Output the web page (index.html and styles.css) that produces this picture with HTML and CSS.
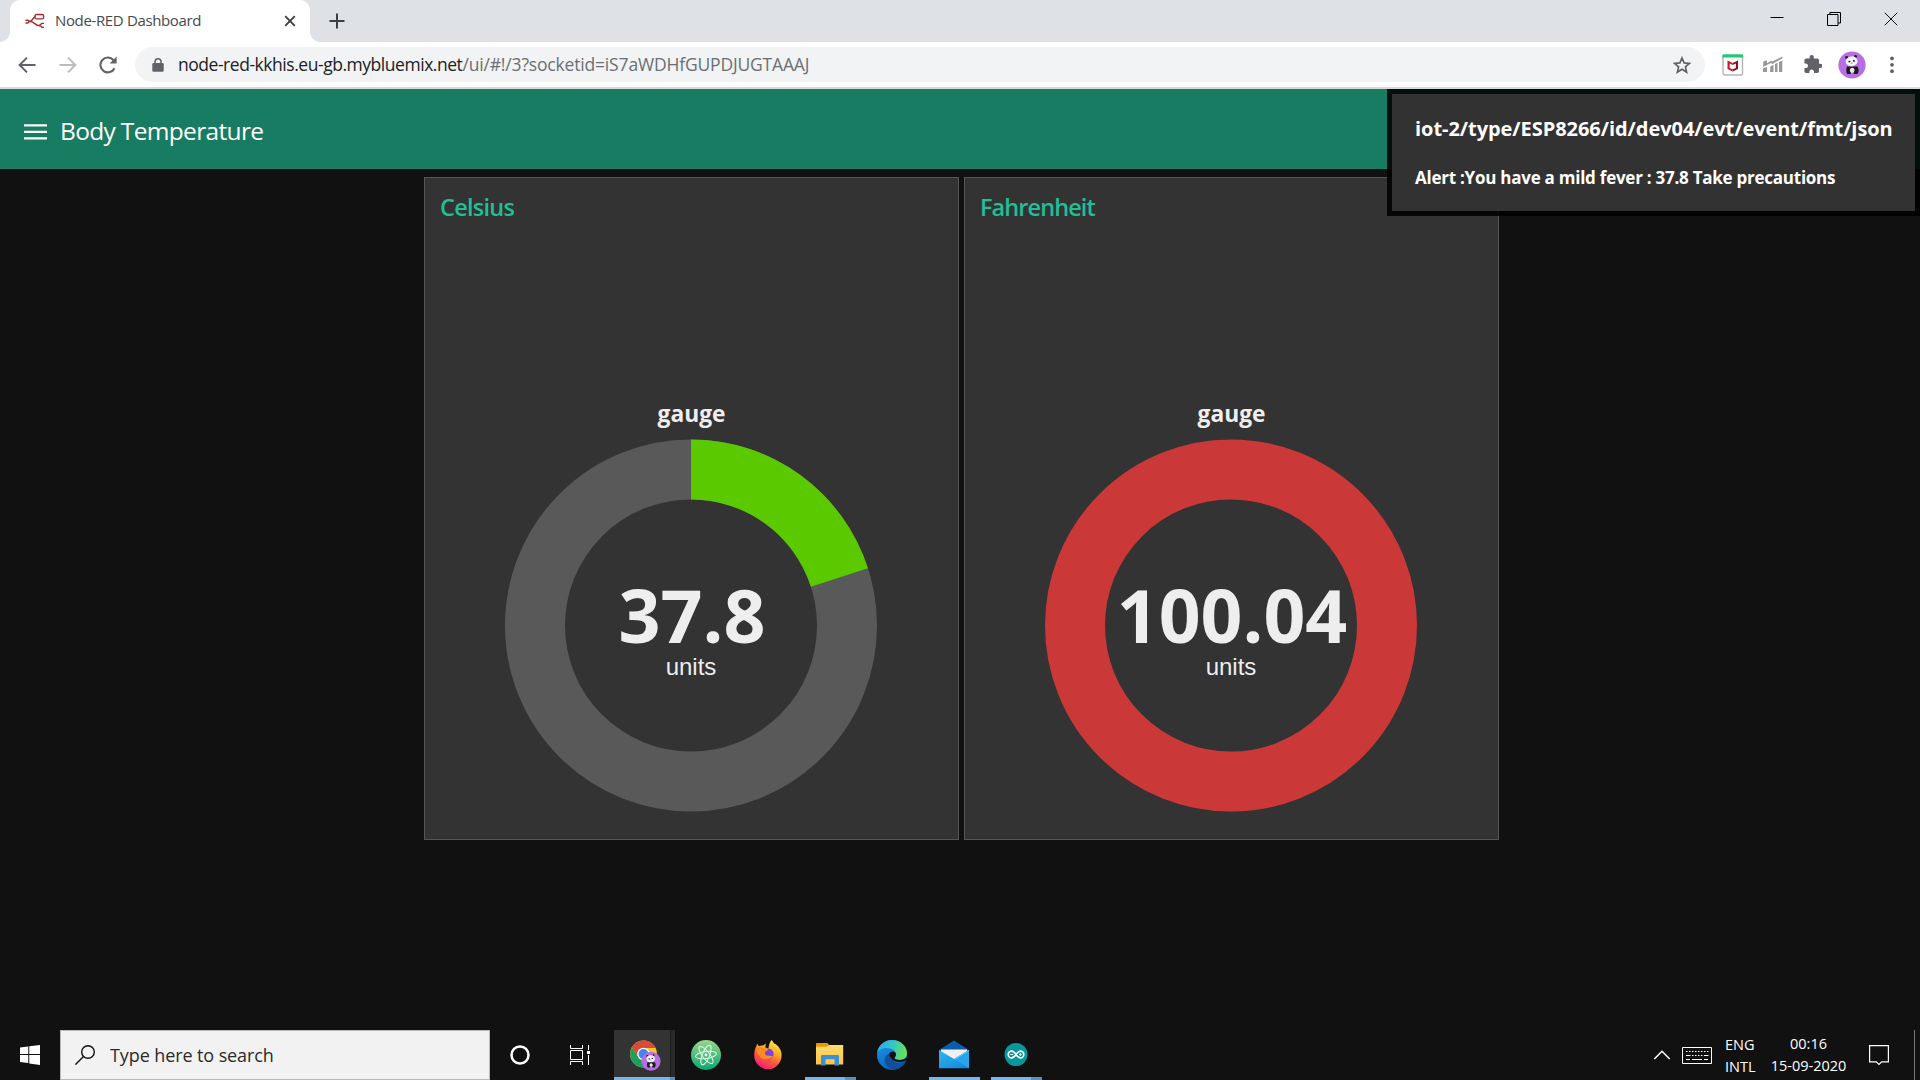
FILE: index.html
```html
<!DOCTYPE html>
<html lang="en">
<head>
<meta charset="utf-8">
<title>Node-RED Dashboard</title>
<link rel="stylesheet" href="styles.css">
</head>
<body>
<svg class="defs" width="0" height="0" aria-hidden="true">
  <defs>
    <linearGradient id="atomG" x1="0" y1="0" x2="0" y2="1"><stop offset="0" stop-color="#9ad58b"/><stop offset="1" stop-color="#0aa773"/></linearGradient>
    <linearGradient id="foxG" x1="0.8" y1="0" x2="0.3" y2="1"><stop offset="0" stop-color="#fff04a"/><stop offset="0.35" stop-color="#ffb02a"/><stop offset="0.65" stop-color="#ff5a35"/><stop offset="1" stop-color="#f0197f"/></linearGradient>
    <linearGradient id="folderG" x1="0" y1="0" x2="0" y2="1"><stop offset="0" stop-color="#ffdc70"/><stop offset="1" stop-color="#fcc544"/></linearGradient>
    <linearGradient id="edgeTop" x1="0" y1="0.3" x2="1" y2="0.5"><stop offset="0" stop-color="#2aa9e6"/><stop offset="0.5" stop-color="#35c6c9"/><stop offset="1" stop-color="#6be24c"/></linearGradient>
    <linearGradient id="edgeLow" x1="0" y1="0" x2="0.5" y2="1"><stop offset="0" stop-color="#1a9ae8"/><stop offset="1" stop-color="#0a63bd"/></linearGradient>
    <linearGradient id="mailG" x1="0" y1="0" x2="1" y2="1"><stop offset="0" stop-color="#31b5ef"/><stop offset="1" stop-color="#1583dc"/></linearGradient>
    <g id="panda">
      <circle cx="14" cy="14" r="13.600" fill="#b56ee4"/>
      <path d="M9 15.500h10.500c1.500 2.500 1.500 5.500 0 7.500h-3.500l-1-2.500h-1.500L12.700 23H9.200c-1.200-2-1.200-5-.2-7.500z" fill="#1d1a1e"/>
      <ellipse cx="14.200" cy="19.300" rx="2.300" ry="2.600" fill="#e8e4e4"/>
      <circle cx="8.600" cy="6.400" r="1.400" fill="#1d1a1e"/><circle cx="17.600" cy="5.400" r="1.400" fill="#1d1a1e"/>
      <ellipse cx="13.600" cy="10.300" rx="6" ry="4.900" transform="rotate(-8 13.600 10.300)" fill="#f4f2f2"/>
      <ellipse cx="11.400" cy="10.600" rx="1.100" ry=".8" fill="#1d1a1e"/><ellipse cx="15.900" cy="9.900" rx="1.100" ry=".8" fill="#1d1a1e"/>
      <circle cx="13.900" cy="12.100" r=".5" fill="#1d1a1e"/>
    </g>
  </defs>
</svg>

<div class="tabstrip">
  <div class="tab">
    <svg class="favicon" width="20" height="16" viewBox="0 0 20 16" fill="none" stroke="#a02c30" stroke-width="1.400">
      <rect x="10" y="1.500" width="8.600" height="4.400" rx="1.400"/>
      <path d="M.5 7.200h2.200l1.800 1.200-1.800 1.600H.5M4.500 8.400c4.200 0 2.600-4.600 6-4.700M4.500 8.400c5.500 0 5.200 4.500 10.400 4.300M19 10.400h-2.200l-1.900 1.600 1.900 2.400H19"/>
    </svg>
    <span class="tab-title">Node-RED Dashboard</span>
    <svg class="tab-close" width="12" height="12" viewBox="0 0 12 12" stroke="#3c4043" stroke-width="1.900"><path d="M1.200 1.200l9.600 9.600M10.800 1.200l-9.600 9.600"/></svg>
  </div>
  <svg class="new-tab" width="16" height="16" viewBox="0 0 16 16" stroke="#3c4043" stroke-width="2"><path d="M8 .5v15M.5 8h15"/></svg>
  <div class="window-buttons">
    <svg width="14" height="14" viewBox="0 0 14 14" stroke="#000"><path d="M.5 5.500h13"/></svg>
    <svg width="14" height="14" viewBox="0 0 14 14" fill="none" stroke="#000"><path d="M.5 2.500h10.500v11H.5zM2.900 2.500v-2h10.600v10.500h-2.500"/></svg>
    <svg width="14" height="14" viewBox="0 0 14 14" stroke="#111"><path d="M.7.7l12.600 12.600M13.300.7L.7 13.300"/></svg>
  </div>
</div>

<div class="toolbar">
  <div class="nav">
    <svg width="18" height="18" viewBox="0 0 18 18" fill="none" stroke="#5f6368" stroke-width="2"><path d="M17.500 9H2M9 1.600L1.600 9 9 16.400"/></svg>
    <svg width="18" height="18" viewBox="0 0 18 18" fill="none" stroke="#babcbe" stroke-width="2"><path d="M.5 9H16M9 1.600L16.400 9 9 16.400"/></svg>
    <svg width="18" height="18" viewBox="0 0 18 18" fill="none" stroke="#5f6368" stroke-width="2.100"><path d="M15.500 12.200A7.400 7.400 0 1 1 14.600 4.300"/><path d="M17.600.6v6.900h-6.900z" fill="#5f6368" stroke="none"/></svg>
  </div>
  <div class="omnibox">
    <svg class="lock" width="12" height="14" viewBox="0 0 12 14"><rect x=".3" y="5" width="11.400" height="8.800" rx="1.300" fill="#5f6368"/><path d="M3 5.500V3.800a3 3 0 0 1 6 0v1.700" fill="none" stroke="#5f6368" stroke-width="1.500"/></svg>
    <div class="url"><span class="url-host">node-red-kkhis.eu-gb.mybluemix.net</span><span class="url-path">/ui/#!/3?socketid=iS7aWDHfGUPDJUGTAAAJ</span></div>
    <svg class="star" width="18" height="18" viewBox="0 0 18 18" fill="none" stroke="#5f6368" stroke-width="1.700"><path d="M9 2l2.100 4.900 5.300.5-4 3.500 1.200 5.200L9 13.300l-4.600 2.800 1.200-5.200-4-3.500 5.300-.5z"/></svg>
  </div>
  <div class="extensions">
    <svg class="ext-shield" width="22" height="22" viewBox="0 0 22 22"><rect x="1" y="1" width="19.500" height="20" rx="1.500" fill="#fff" stroke="#b5b5b5" stroke-width="1.400"/><path d="M.5.500H21v3H.5z" fill="#12cf70"/><path d="M5.500 6.500l5.200 2.400v2L7.700 9.600v4.300l3 1.400v2.300l-5.200-2.600z" fill="#d1152c"/><path d="M16 6.500l-5.300 2.400v2l3.200-1.300v4.300l-3.200 1.400v2.300l5.300-2.600z" fill="#8d0f1c"/></svg>
    <svg class="ext-chart" width="20" height="17" viewBox="0 0 20 17" fill="#999"><path d="M0 12.300l4-1.400V16H0zM7.200 10.600l3.300-1.800V16H7.200zM12 8.100l2.500-1.300V16H12zM16 6l3.300-1.600V16H16z"/><path d="M.3 5.400L4 4.200v3l4-2.400 1.200.8L19.300.6v1.900L9.300 7.900l-1.300-.8L0 10.900z"/></svg>
    <svg class="ext-puzzle" width="18" height="19" viewBox="1.500 1 21 22" fill="#5f6368"><path d="M20.500 11H19V7c0-1.100-.9-2-2-2h-4V3.500a2.500 2.500 0 0 0-5 0V5H4c-1.100 0-1.990.9-1.990 2v3.800H3.500c1.490 0 2.700 1.210 2.700 2.700s-1.210 2.700-2.700 2.700H2V20c0 1.100.9 2 2 2h3.800v-1.500c0-1.490 1.210-2.700 2.700-2.700s2.700 1.210 2.700 2.700V22H17c1.100 0 2-.9 2-2v-4h1.500a2.500 2.500 0 0 0 0-5z"/></svg>
    <svg class="avatar" width="28" height="28" viewBox="0 0 28 28"><use href="#panda"/></svg>
    <svg width="4" height="18" viewBox="0 0 4 18" fill="#5f6368"><circle cx="2" cy="2.400" r="1.900"/><circle cx="2" cy="8.800" r="1.900"/><circle cx="2" cy="15.200" r="1.900"/></svg>
  </div>
</div>

<header class="dash-header">
  <svg class="menu" width="24" height="16" viewBox="0 0 24 16" fill="#fff"><path d="M0 .2h23v2.300H0zM0 6.700h23V9H0zM0 13.200h23v2.300H0z"/></svg>
  <h1>Body Temperature</h1>
  <div class="toast">
    <h3>iot-2/type/ESP8266/id/dev04/evt/event/fmt/json</h3>
    <p>Alert :You have a mild fever : 37.8 Take precautions</p>
  </div>
</header>

<main class="dashboard">
  <section class="card">
    <h2>Celsius</h2>
    <svg class="gauge" width="500" height="440" viewBox="0 0 500 440">
      <text class="gauge-title" x="250.500" y="37" textLength="68" lengthAdjust="spacingAndGlyphs">gauge</text>
      <circle cx="250" cy="240.500" r="156" fill="none" stroke="#595959" stroke-width="60"/>
      <path d="M250 54.500A186 186 0 0 1 427 183.300L369.900 201.700A126 126 0 0 0 250 114.500z" fill="#5bc900"/>
      <text class="gauge-value" x="251" y="258" textLength="147" lengthAdjust="spacingAndGlyphs">37.8</text>
      <text class="gauge-units" x="250" y="290">units</text>
    </svg>
  </section>
  <section class="card">
    <h2 class="long">Fahrenheit</h2>
    <svg class="gauge" width="500" height="440" viewBox="0 0 500 440">
      <text class="gauge-title" x="250.500" y="37" textLength="68" lengthAdjust="spacingAndGlyphs">gauge</text>
      <circle cx="250" cy="240.500" r="156" fill="none" stroke="#ca3838" stroke-width="60"/>
      <text class="gauge-value" x="251" y="258" textLength="230.500" lengthAdjust="spacingAndGlyphs">100.04</text>
      <text class="gauge-units" x="250" y="290">units</text>
    </svg>
  </section>
</main>

<footer class="taskbar">
  <div class="start"><svg width="20" height="20" viewBox="0 0 20 20" fill="#fff"><path d="M0 2.600L8.300 1.500v7.600H0zM9.300 1.300L20 0v9.100H9.300zM0 10.100h8.300v8L0 17zM9.300 10.100H20V20L9.300 18.400z"/></svg></div>
  <div class="search">
    <svg width="20" height="20" viewBox="0 0 20 20" fill="none" stroke="#111" stroke-width="1.400"><circle cx="13" cy="7" r="6.300"/><path d="M8.500 11.500L.4 19.600"/></svg>
    <span>Type here to search</span>
  </div>
  <div class="sysbtn"><svg width="20" height="20" viewBox="0 0 20 20" fill="none" stroke="#fff" stroke-width="2.500"><circle cx="10" cy="10" r="8.500"/></svg></div>
  <div class="sysbtn taskview"><svg width="20" height="20" viewBox="0 0 20 20" fill="none" stroke="#fff"><path d="M.5 0v3.500h12V0M.5 5.500h12v9H.5zM.5 20v-3.500h12V20M18.500 0v5M18.500 10v10"/><path d="M17 6h3v3h-3z" fill="#fff" stroke="none"/></svg></div>
  <div class="app active split">
    <svg width="32" height="32" viewBox="0 0 32 32">
      <circle cx="14.500" cy="15" r="13.500" fill="#fbc32d"/>
      <path d="M2.800 8.300A13.500 13.500 0 0 1 26.500 9H14.500a6 6 0 0 0-5.600 8.200z" fill="#d9493c"/>
      <path d="M2.800 8.300A13.500 13.500 0 0 0 14.500 28.500L19 19a6 6 0 0 1-9.800-1z" fill="#1f9f5c"/>
      <circle cx="14.500" cy="15" r="6.200" fill="#fff"/><circle cx="14.500" cy="15" r="4.900" fill="#4384ee"/>
      <use href="#panda" transform="translate(12.200 12.500) scale(.7)"/>
    </svg>
  </div>
  <div class="app">
    <svg width="32" height="32" viewBox="0 0 32 32"><circle cx="16" cy="16" r="15" fill="url(#atomG)"/><g fill="none" stroke="#e0f8e4" stroke-width="1"><ellipse cx="16" cy="16" rx="10.500" ry="3.600" transform="rotate(-8 16 16)"/><ellipse cx="16" cy="16" rx="10.500" ry="3.600" transform="rotate(52 16 16)"/><ellipse cx="16" cy="16" rx="10.500" ry="3.600" transform="rotate(112 16 16)"/></g><circle cx="16" cy="16" r="1.400" fill="#fff"/></svg>
  </div>
  <div class="app">
    <svg width="32" height="32" viewBox="0 0 32 32"><path d="M19.500 1c1.500 1.200 2.300 2.500 2.700 4 .8-.5 1.500-.3 2 .5 3.700 3 5.400 6.500 5.400 10.500a13.700 14 0 0 1-27.400.5c0-4 .8-7 2.200-9.500l.7-2.200 1.700 2.200c1.500-.6 3-.7 4.300-.4l2.700-2-.5 3.800 3.100 1.200c.5-3.700 1.300-6.400 3.100-8.600z" fill="url(#foxG)"/><circle cx="16" cy="15" r="5.600" fill="#7d42d8"/><path d="M5 9.500c3-1.500 5.500-1 7.500.2l3.700.6c-.3 1.500-1.500 2-3 2.400-.8 2.300.5 4.300 3 4.100 2.500-.2 3.500.2 4.800.2-2.500 4-9.500 4.500-13 .8C5.700 15.500 4.700 12.700 5 9.500z" fill="#ff8a26"/></svg>
  </div>
  <div class="app running split">
    <svg width="32" height="32" viewBox="1 0 32 32"><path d="M3 4.500A1 1 0 0 1 4 4h10.500l1.800 2.300L14 9H3z" fill="#e39c04"/><path d="M3 7.700h11l2-1.700h14.200v19.500H3z" fill="url(#folderG)"/><path d="M8 26.500v-9.800l1-.7h16l1 .7v9.800h-4.500v-6.200h-9v6.200z" fill="#3c91d3"/></svg>
  </div>
  <div class="app">
    <svg width="32" height="32" viewBox="0 0 32 32"><circle cx="16" cy="16" r="15" fill="url(#edgeLow)"/><path d="M1.100 14C2 6.500 8.500 1 16 1c8.500 0 15 6 15 13 0 4.500-3.500 7-7.500 7-2.500 0-5-.7-5-2 0-.7 1.500-1.500 1.500-3.700C20 12 15.500 9 10.500 9 5.500 9 2.500 11.500 1.100 14z" fill="url(#edgeTop)"/><path d="M13.300 14.500c-3.300 1.500-5.300 4.500-4.300 8.500 1 4.500 5.500 7.800 10.500 7.500 4-.8 7.300-3 9.300-6.500.3-.7-.2-1-.8-.7-5 2.200-14 .2-14.700-8.800z" fill="#114f9c"/><path d="M13.400 14.300c-.5 5.500 5 9 10.600 8.700 3-.1 5-1 7-2.300V18.500C29 20.300 26 21 23.500 21c-2.500 0-5-.7-5-2 0-.7 1.500-1.500 1.500-3.700-.5-3-4-3.800-6.600-1z" fill="#111"/></svg>
  </div>
  <div class="app running">
    <svg width="32" height="32" viewBox="0 0 32 32"><path d="M1 11L16 1.500 31 11v10H1z" fill="#0b5cad"/><path d="M3 10.500h26v10H3z" fill="#f0f0f0"/><path d="M1 11l15 9 15-9v18.300H1z" fill="url(#mailG)"/><path d="M31 11v18.300L16 20z" fill="#27a5ea"/><path d="M31 11v1L17 20.600l-1-.6z" fill="#62d3f8"/></svg>
  </div>
  <div class="app running split">
    <svg width="32" height="32" viewBox="0 0 32 32"><circle cx="16" cy="15.500" r="11.500" fill="#08979d"/><g fill="none" stroke="#fff" stroke-width="1.600"><path d="M16 15.500c-1.600-2.400-2.900-3.400-4.400-3.400a3.400 3.400 0 0 0 0 6.800c1.500 0 2.800-1 4.400-3.400s2.900-3.400 4.400-3.400a3.400 3.400 0 0 1 0 6.800c-1.500 0-2.800-1-4.400-3.400z"/><path d="M10.300 15.500h2.600M19.100 15.500h2.600M20.400 14.200v2.600" stroke-width="1"/></g></svg>
  </div>
  <div class="tray">
    <svg class="chevron" width="18" height="10" viewBox="0 0 18 10" fill="none" stroke="#fff" stroke-width="1.500"><path d="M1.300 9L9 1.300 16.700 9"/></svg>
    <svg class="keyboard" width="30" height="17" viewBox="0 0 30 17" fill="none" stroke="#fff"><path d="M.5.500h29v16H.5z"/><path d="M4 4.500h23M4 8.500h23" stroke-dasharray="1.500 1.500"/><path d="M4 12.500h4M10 12.500h10M22 12.500h4M4 8.500h3M23 8.500h3"/></svg>
    <div class="lang"><span>ENG</span><span>INTL</span></div>
    <div class="clock"><span class="time">00:16</span><span class="date">15-09-2020</span></div>
    <svg class="notify" width="20" height="21" viewBox="0 0 20 21" fill="none" stroke="#fff" stroke-width="1.200"><path d="M.6.600h18.800v16.200h-6.700L10 19.500l-2.700-2.700H.6z"/></svg>
    <div class="show-desktop"></div>
  </div>
</footer>
</body>
</html>
```
FILE: styles.css
```css
* { box-sizing: border-box; }
html, body { height: 100%; }
body {
  margin: 0;
  display: flex;
  flex-direction: column;
  overflow: hidden;
  background: #111;
  color: #eee;
  font-family: "Open Sans", "Noto Sans", sans-serif;
}
h1, h2, h3, p { margin: 0; font-weight: 400; white-space: nowrap; }
svg { display: block; flex: none; }
.defs { position: absolute; }

/* Tab strip */
.tabstrip {
  flex: none;
  height: 42px;
  padding-left: 10px;
  display: flex;
  align-items: center;
  background: #dee1e6;
}
.tab {
  position: relative;
  width: 300px;
  height: 42px;
  padding: 0 14px 0 15px;
  display: flex;
  align-items: center;
  background: #fff;
  border-radius: 10px 10px 0 0;
}
.tab::before, .tab::after {
  content: "";
  position: absolute;
  bottom: 0;
  width: 10px;
  height: 10px;
}
.tab::before { left: -10px; background: radial-gradient(circle at 0 0, #dee1e6 9.500px, #fff 10px); }
.tab::after { right: -10px; background: radial-gradient(circle at 100% 0, #dee1e6 9.500px, #fff 10px); }
.tab-title { margin-left: 10px; padding-bottom: 2px; font-size: 15px; letter-spacing: -.36px; color: #45494d; white-space: nowrap; }
.tab-close { margin-left: auto; }
.new-tab { margin-left: 19px; }
.window-buttons { margin: -5px 22px 0 auto; display: flex; gap: 43px; }

/* Address bar */
.toolbar {
  flex: none;
  height: 47px;
  padding-left: 18px;
  display: flex;
  align-items: center;
  background: #fff;
  border-bottom: 2px solid #d9dbdf;
}
.nav { width: 117px; display: flex; gap: 22.500px; }
.omnibox {
  width: 1570px;
  height: 35px;
  padding: 0 14px 0 17px;
  display: flex;
  align-items: center;
  border-radius: 18px;
  background: #f1f3f4;
}
.url { margin-left: 14px; padding-bottom: 2px; font-size: 17.500px; white-space: nowrap; }
.url-host { color: #202124; letter-spacing: -.46px; }
.url-path { color: #6b6f73; letter-spacing: -.17px; }
.star { margin-left: auto; }
.extensions { flex: 1; padding-left: 17px; display: flex; align-items: center; }
.ext-shield { margin-right: 19px; }
.ext-chart { margin-right: 21px; }
.ext-puzzle { margin-right: 16px; }
.avatar { margin-right: 24px; }

/* Dashboard header and notification */
.dash-header {
  position: relative;
  flex: none;
  height: 80px;
  padding: 3px 0 0 24px;
  display: flex;
  align-items: center;
  gap: 12px;
  background: #177c61;
}
.menu { margin-top: 2px; }
.dash-header h1 { font-size: 24.500px; letter-spacing: -.67px; color: #fff; }
.toast {
  position: absolute;
  z-index: 2;
  top: 0;
  right: 0;
  width: 533px;
  height: 127px;
  padding: 21px 23px;
  display: flex;
  flex-direction: column;
  gap: 23px;
  border: 5px solid rgba(0, 0, 0, .88);
  background: #323232;
  background-clip: padding-box;
  color: #fff;
}
.toast h3 { font-size: 20px; line-height: 28px; font-weight: 700; letter-spacing: -.05px; }
.toast p { font-size: 17px; line-height: 24px; font-weight: 700; letter-spacing: -.25px; }

/* Gauge cards */
.dashboard {
  flex: 1;
  padding-top: 8px;
  padding-left: 3px;
  display: flex;
  justify-content: center;
  align-items: flex-start;
  gap: 5px;
}
.card {
  width: 535px;
  height: 663px;
  padding: 12px 16px 14px 14px;
  display: flex;
  flex-direction: column;
  justify-content: space-between;
  border: 1px solid #555;
  background: #333;
}
.card h2 { padding-left: 1px; font-size: 23.500px; line-height: 34px; font-weight: 600; letter-spacing: -.75px; color: #20bf96; }
.card h2.long { letter-spacing: -.92px; }
.gauge { align-self: center; overflow: visible; }
.gauge text { text-anchor: middle; fill: #eee; }
.gauge-title { font-size: 23px; font-weight: 700; }
.gauge-value { font-size: 74px; font-weight: 700; }
.gauge-units { font-family: "Liberation Sans", Arial, sans-serif; font-size: 24px; }

/* Windows taskbar */
.taskbar { flex: none; height: 50px; display: flex; background: #111; }
.start { width: 60px; display: grid; place-items: center; }
.search {
  width: 430px;
  padding-left: 14px;
  display: flex;
  align-items: center;
  gap: 15px;
  border: 1px solid #b9b9b9;
  background: #f2f2f2;
  color: #2b2b2b;
  font-size: 18px;
  letter-spacing: -.1px;
  white-space: nowrap;
}
.sysbtn { width: 60px; display: grid; place-items: center; }
.taskview { width: 64px; padding-right: 4px; }
.app { position: relative; width: 62px; padding-right: 2px; display: grid; place-items: center; }
.app.running::after, .app.active::after {
  content: "";
  position: absolute;
  left: 5px;
  bottom: 0;
  width: 51px;
  height: 3px;
  background: #76b5ed;
}
.app.active::after { left: 0; width: 61px; }
.app.running.split::after { background: linear-gradient(to right, #76b5ed 40px, #5b8fbd 40px); }
.app.active.split { padding-right: 0; background: linear-gradient(to right, #333 56px, #1c1c1c 56px, #1c1c1c 57px, #2a2a2a 57px, #2a2a2a 61px, #111 61px); }
.app.active.split::after { background: linear-gradient(to right, #76b5ed 56px, #5b8fbd 56px); }
.tray { flex: 1; display: flex; align-items: center; justify-content: flex-end; font-size: 14.500px; color: #fff; }
.chevron { margin-right: 11px; }
.keyboard { margin-right: 13px; }
.lang, .clock { display: flex; flex-direction: column; line-height: 22px; white-space: nowrap; }
.lang { width: 29px; padding-top: 2px; }
.clock { width: 109px; align-items: center; }
.notify { margin-right: 25px; margin-left: 6px; }
.show-desktop { width: 6px; height: 50px; border-left: 1px solid #777; }
```
